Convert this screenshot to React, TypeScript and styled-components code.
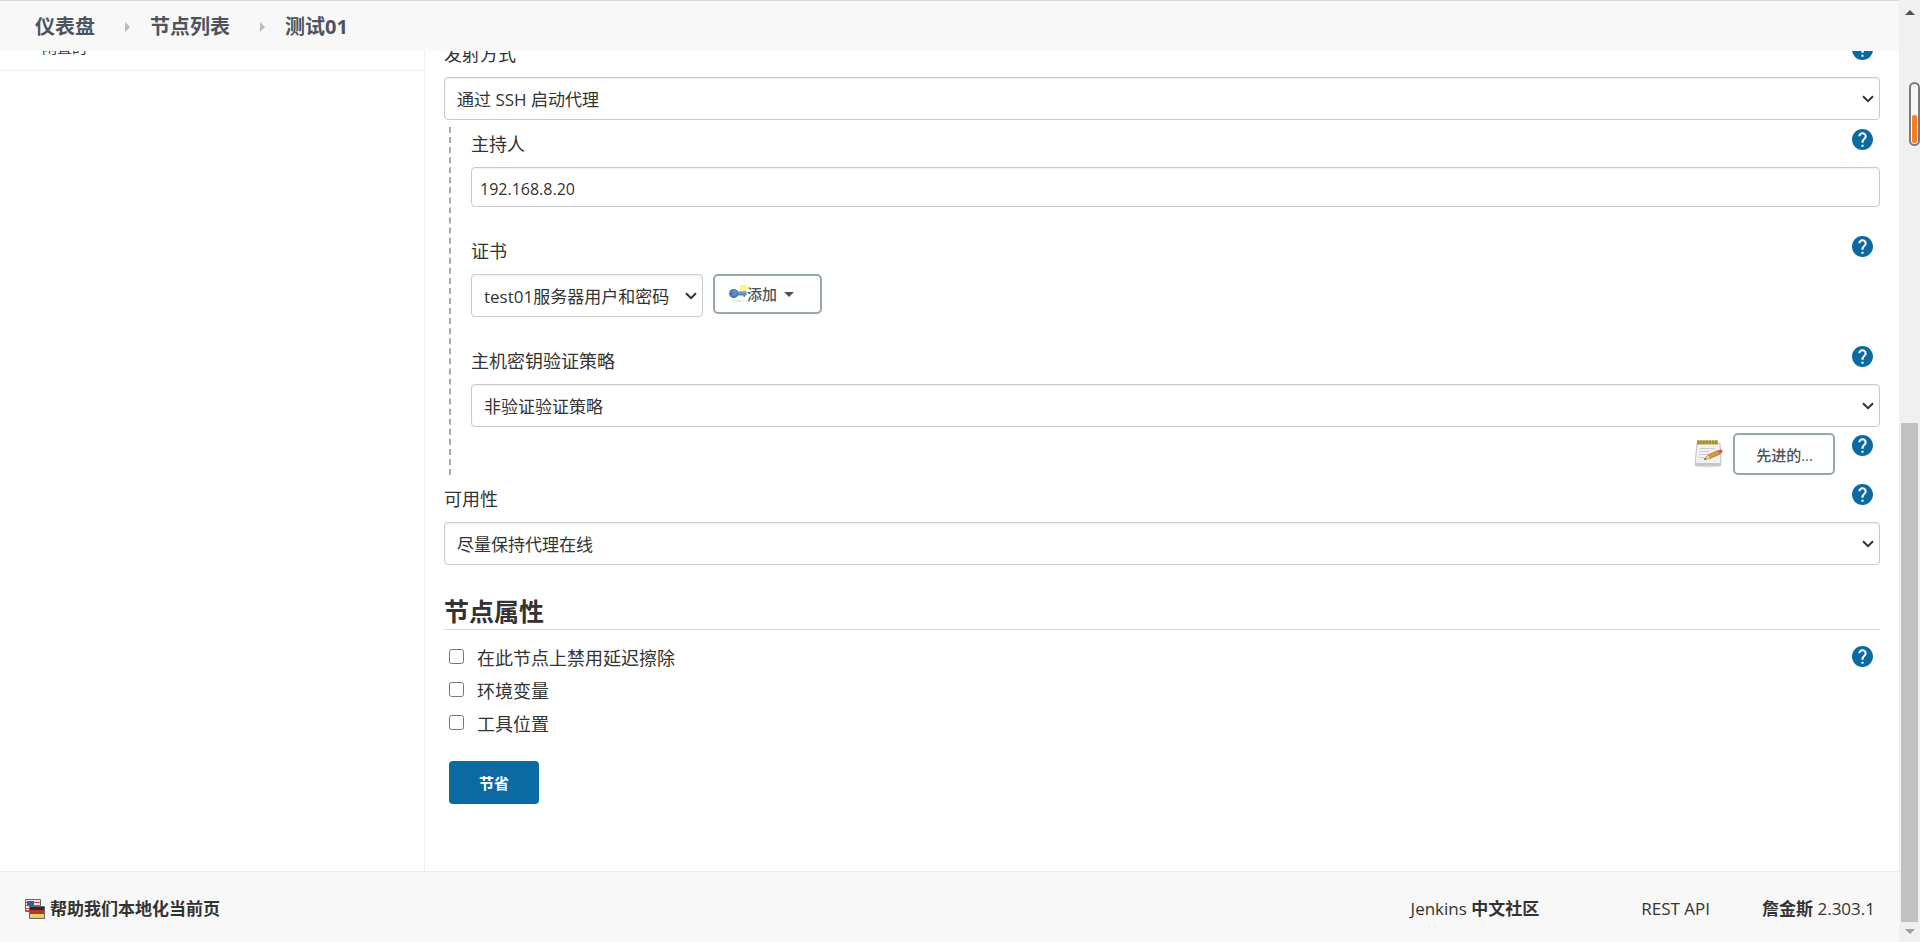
import React, { useId } from "react";
import styled, { createGlobalStyle } from "styled-components";

const GlobalStyle = createGlobalStyle`
  *, *::before, *::after { box-sizing: border-box; }
  body {
    margin: 0;
    background: #fff;
    color: #333;
    font-family: "Open Sans", "Noto Sans CJK SC", sans-serif;
    font-size: 18px;
  }
  button, input, select { font-family: inherit; color: inherit; margin: 0; }
  a { color: inherit; text-decoration: none; }
`;

const Window = styled.div`
  display: flex;
  min-height: 100vh;
`;

const Page = styled.div`
  flex: 1;
  min-width: 0;
  display: flex;
  flex-direction: column;
`;

const Header = styled.header`
  position: sticky;
  top: 0;
  z-index: 1;
  flex: none;
  border-top: 1px solid #d9d9d9;
  background: #f8f8f8;
`;

const Breadcrumbs = styled.ol`
  display: flex;
  align-items: center;
  height: 50px;
  margin: 0;
  padding: 2px 35px 0;
  list-style: none;
`;

const Crumb = styled.li`
  display: flex;
  align-items: center;
  color: #4d545d;
  font-size: 20px;
  font-weight: 700;
  line-height: 24px;

  & + &::before {
    content: "";
    margin: 0 20px 0 30px;
    border: solid transparent;
    border-width: 5px 0 5px 5px;
    border-left-color: #bbb;
  }
`;

const Body = styled.div`
  flex: 1;
  display: flex;
  margin-top: -12px;
`;

const Sidebar = styled.aside`
  flex: 0 0 425px;
  border-right: 1px solid #eaeff2;
`;

const ExecutorState = styled.div`
  padding: 0 42px 15px;
  border-bottom: 1px solid #eaeff2;
  font-size: 15px;
  line-height: 16px;
`;

const Main = styled.main`
  flex: 1;
  min-width: 0;
  padding: 0 19px 48px;
`;

const FieldHead = styled.div`
  display: flex;
  justify-content: space-between;
  align-items: flex-start;
  height: 38px;
  padding-right: 7px;
`;

const Label = styled.label`
  font-size: 18px;
  line-height: 30px;
`;

const HelpButton = styled.button`
  flex: none;
  width: 21px;
  height: 21px;
  padding: 0;
  border: 0;
  background: none;

  svg { display: block; }
`;

const Field = styled.div`
  & + & { margin-top: 29px; }
`;

const TextInput = styled.input`
  display: block;
  width: 100%;
  height: 40px;
  padding: 4px 8px 0;
  border: 1px solid #c9c9c9;
  border-radius: 4px;
  background: #fff;
  box-shadow: inset 0 1px 2px #0000000f;
  font-size: 16px;
`;

const SelectBox = styled.div<{ $fit?: boolean }>`
  position: relative;
  width: ${(p) => (p.$fit ? "max-content" : "auto")};

  select {
    display: block;
    width: 100%;
    height: 43px;
    padding: 2px 32px 0 12px;
    border: 1px solid #c9c9c9;
    border-radius: 4px;
    background: #fff;
    box-shadow: inset 0 1px 2px #0000000f;
    font-size: 17px;
    appearance: none;
  }

  svg {
    position: absolute;
    right: 6px;
    top: 50%;
    margin-top: -4px;
    pointer-events: none;
  }
`;

const LaunchGroup = styled.div`
  margin: 7px 0 9px 5px;
  padding: 2px 0 0 20px;
  border-left: 2px dashed #aaa;
`;

const InlineControls = styled.div`
  display: flex;
  align-items: flex-start;
  gap: 10px;
`;

const OutlineButton = styled.button`
  display: flex;
  align-items: center;
  height: 40px;
  padding: 0 26px 0 14px;
  border: 2px solid #98a6af;
  border-radius: 5px;
  background: #fff;
  color: #4d545d;
  font-size: 15px;
  font-weight: 500;
  line-height: 18px;
`;

const AdvancedButton = styled(OutlineButton)`
  height: 42px;
  padding: 2px 20px 0 21px;
  margin: 0 17px 0 10px;
`;

const Caret = styled.span`
  margin-left: 7px;
  border: solid transparent;
  border-width: 5px 5px 0;
  border-top-color: #4d545d;
`;

const AdvancedRow = styled.div`
  display: flex;
  justify-content: flex-end;
  margin-top: 6px;
  padding-right: 7px;

  ${HelpButton} { margin-top: 2px; }
  > svg { margin-top: 6px; }
`;

const SectionTitle = styled.h2`
  margin: 28px 0 10px;
  border-bottom: 1px solid #dcdcdc;
  font-size: 25px;
  font-weight: 700;
  line-height: 36px;
`;

const CheckRow = styled.div`
  display: flex;
  align-items: center;
  height: 33px;
  padding: 0 7px 0 5px;

  input {
    width: 15px;
    height: 15px;
  }

  label {
    flex: 1;
    padding: 2px 0 0 13px;
    line-height: 28px;
  }
`;

const SaveButton = styled.button`
  margin: 22px 0 0 5px;
  padding: 0 30px;
  height: 43px;
  border: 0;
  border-radius: 4px;
  background: #0b6aa2;
  color: #fff;
  font-size: 15px;
  font-weight: 700;
`;

const Footer = styled.footer`
  display: flex;
  align-items: center;
  height: 71px;
  padding: 4px 24px 0 25px;
  border-top: 1px solid #eaecee;
  background: #f8f8f8;
  font-size: 17px;
  line-height: 24px;
`;

const LocaleLink = styled.a`
  display: flex;
  align-items: center;
  gap: 5px;
  margin-right: auto;
  font-weight: 700;
`;

const FooterLink = styled.a<{ $gap?: number }>`
  margin-left: ${(p) => p.$gap ?? 0}px;
`;

const ScrollTrack = styled.div`
  flex: 0 0 21px;
  display: flex;
  flex-direction: column;
  align-items: center;
  justify-content: space-between;
  height: 100vh;
  position: sticky;
  top: 0;
  padding: 10px 0 8px;
  background: #f0f0f0;
`;

const ScrollArrow = styled.span<{ $down?: boolean }>`
  border: solid transparent;
  border-width: ${(p) => (p.$down ? "5px 5px 0" : "0 5px 5px")};
  border-top-color: ${(p) => (p.$down ? "#a0a0a0" : "transparent")};
  border-bottom-color: ${(p) => (p.$down ? "transparent" : "#505050")};
`;

const ScrollThumb = styled.span`
  width: 17px;
  height: 54%;
  margin: auto 0 7px;
  background: #c1c1c1;
`;

const Gauge = styled.div`
  position: absolute;
  top: 82px;
  right: 0;
  display: flex;
  align-items: flex-end;
  width: 11px;
  height: 64px;
  padding: 1px;
  border: 2px solid #7b7b7b;
  border-radius: 6px;
  background: #f8f8f8;
`;

const GaugeLevel = styled.span`
  width: 100%;
  height: 48%;
  border-radius: 2px;
  background: #ff7a22;
`;

function Help({ topic }: { topic: string }) {
  return (
    <HelpButton type="button" aria-label={topic}>
      <svg width="21" height="21" viewBox="2 2 20 20">
        <path
          fill="#0b6aa2"
          d="M12 2C6.48 2 2 6.48 2 12s4.48 10 10 10 10-4.48 10-10S17.52 2 12 2zm1 17h-2v-2h2v2zm2.07-7.75l-.9.92C13.45 12.9 13 13.5 13 15h-2v-.5c0-1.1.45-2.1 1.17-2.83l1.24-1.26c.37-.36.59-.86.59-1.41 0-1.1-.9-2-2-2s-2 .9-2 2H8c0-2.21 1.79-4 4-4s4 1.79 4 4c0 .88-.36 1.68-.93 2.25z"
        />
      </svg>
    </HelpButton>
  );
}

function Select({ id, value, fit }: { id: string; value: string; fit?: boolean }) {
  return (
    <SelectBox $fit={fit}>
      <select id={id}>
        <option>{value}</option>
      </select>
      <svg width="12" height="8" viewBox="0 0 12 8" fill="none" stroke="#333" strokeWidth="2">
        <path d="M1 1.2 6 6.2 11 1.2" />
      </svg>
    </SelectBox>
  );
}

function FormField({
  label,
  children,
}: {
  label: string;
  children: (id: string) => React.ReactNode;
}) {
  const id = useId();
  return (
    <Field>
      <FieldHead>
        <Label htmlFor={id}>{label}</Label>
        <Help topic={label} />
      </FieldHead>
      {children(id)}
    </Field>
  );
}

function CheckField({ label, help }: { label: string; help?: boolean }) {
  const id = useId();
  return (
    <CheckRow>
      <input type="checkbox" id={id} />
      <label htmlFor={id}>{label}</label>
      {help && <Help topic={label} />}
    </CheckRow>
  );
}

function KeyIcon() {
  return (
    <svg width="18" height="18" viewBox="0 0 18 18">
      <ellipse cx="9" cy="16" rx="6" ry="1" fill="#e9e9e9" />
      <circle cx="14.500" cy="3.500" r="3.400" fill="#fff36b" />
      <circle cx="14.500" cy="3.500" r="1.400" fill="#fffbd0" />
      <path d="M7 6.500h10.500v4H16V12h-1.500v-1.500H7z" fill="#5583bd" />
      <path d="M8 8h9.500" stroke="#86abd8" />
      <circle cx="4.700" cy="8.500" r="4.600" fill="#4676b3" />
      <circle cx="5.200" cy="8" r="3" fill="#5f8dc6" />
      <circle cx="2.800" cy="8.500" r="1" fill="#3c69a3" />
    </svg>
  );
}

function NotepadIcon() {
  return (
    <svg width="29" height="29" viewBox="0 0 29 29">
      <ellipse cx="14" cy="27" rx="13" ry="1.500" fill="#dedede" />
      <path d="M3 4h23l1 22H1z" fill="#f1f1f1" stroke="#c4c4c4" />
      <path d="M1 24h26v2.500H1z" fill="#c6c6c6" />
      <path d="M3 1.500h21v4H3z" fill="#b7a53d" />
      <path d="M4 1v4M7 1v4M10 1v4M13 1v4M16 1v4M19 1v4M22 1v4" stroke="#8d8130" />
      <path d="M5 9.500h16M5 12.500h10M5 15.500h13M5 18.500h5" stroke="#cdcdcd" />
      <path d="M10 20.500l4-4.500 10-4.500 2 3.500-10 4.500z" fill="#d99a3a" stroke="#9c6a22" strokeWidth=".7" />
      <path d="M10 20.500l4-4.500 2 3.500z" fill="#e8cfa0" />
      <path d="M10 20.500l1.500-1.700 .8 1.200z" fill="#333" />
      <path d="M24 11.500l3-1.200q2 .5 1.500 3.200L26 15z" fill="#d9604c" />
    </svg>
  );
}

function FlagsIcon() {
  return (
    <svg width="20" height="20" viewBox="0 0 20 20">
      <path d="M.5.500h15v12H.5z" fill="#f3e6e6" stroke="#666" />
      <path d="M1 3.500h14M1 6.500h14M1 9.500h14M1 11.500h14" stroke="#cf4a4a" />
      <path d="M2 2h7v5H2z" fill="#2f5fa8" />
      <path d="M4.500 7.500h15v12h-15z" fill="#2b2b2b" stroke="#666" />
      <path d="M5 11h14v4H5z" fill="#b8323a" />
      <path d="M5 15h14v4H5z" fill="#e3d35c" />
    </svg>
  );
}

export default function App() {
  return (
    <Window>
      <GlobalStyle />
      <Page>
        <Header>
          <nav>
            <Breadcrumbs>
              <Crumb><a href="#dashboard">仪表盘</a></Crumb>
              <Crumb><a href="#nodes">节点列表</a></Crumb>
              <Crumb><a href="#node">测试01</a></Crumb>
            </Breadcrumbs>
          </nav>
        </Header>
        <Body>
          <Sidebar>
            <ExecutorState>闲置的</ExecutorState>
          </Sidebar>
          <Main>
            <FormField label="发射方式">
              {(id) => <Select id={id} value="通过 SSH 启动代理" />}
            </FormField>
            <LaunchGroup>
              <FormField label="主持人">
                {(id) => <TextInput id={id} type="text" defaultValue="192.168.8.20" />}
              </FormField>
              <FormField label="证书">
                {(id) => (
                  <InlineControls>
                    <Select id={id} value="test01服务器用户和密码" fit />
                    <OutlineButton type="button">
                      <KeyIcon />
                      添加
                      <Caret />
                    </OutlineButton>
                  </InlineControls>
                )}
              </FormField>
              <FormField label="主机密钥验证策略">
                {(id) => <Select id={id} value="非验证验证策略" />}
              </FormField>
              <AdvancedRow>
                <NotepadIcon />
                <AdvancedButton type="button">先进的...</AdvancedButton>
                <Help topic="先进的" />
              </AdvancedRow>
            </LaunchGroup>
            <FormField label="可用性">
              {(id) => <Select id={id} value="尽量保持代理在线" />}
            </FormField>
            <SectionTitle>节点属性</SectionTitle>
            <CheckField label="在此节点上禁用延迟擦除" help />
            <CheckField label="环境变量" />
            <CheckField label="工具位置" />
            <SaveButton type="button">节省</SaveButton>
          </Main>
        </Body>
        <Footer>
          <LocaleLink href="#translate">
            <FlagsIcon />
            帮助我们本地化当前页
          </LocaleLink>
          <FooterLink href="#community">Jenkins <b>中文社区</b></FooterLink>
          <FooterLink href="#api" $gap={102}>REST API</FooterLink>
          <FooterLink href="#version" $gap={52}><b>詹金斯</b> 2.303.1</FooterLink>
        </Footer>
      </Page>
      <ScrollTrack aria-hidden="true">
        <ScrollArrow />
        <ScrollThumb />
        <ScrollArrow $down />
        <Gauge>
          <GaugeLevel />
        </Gauge>
      </ScrollTrack>
    </Window>
  );
}
